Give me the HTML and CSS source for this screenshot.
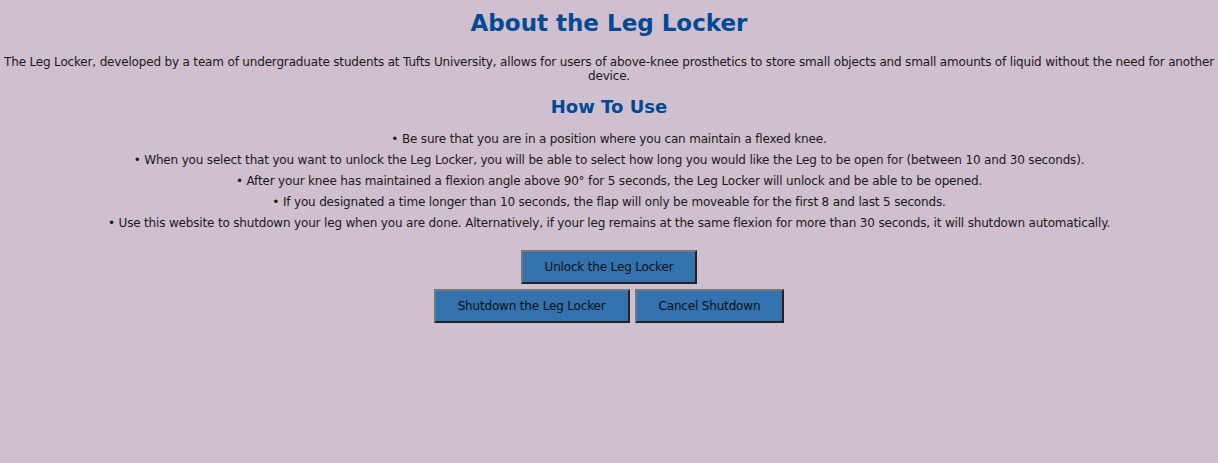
FILE: index.html
```html
<!DOCTYPE html>
<html>
<head>
<meta charset="utf-8">
<link rel="stylesheet" href="styles.css">
</head>
<body>
<div class="page">
  <h1 class="title">About the Leg Locker</h1>
  <p class="intro">The Leg Locker, developed by a team of undergraduate students at Tufts University, allows for users of above-knee prosthetics to store small objects and small amounts of liquid without the need for another device.</p>
  <h2 class="subtitle">How To Use</h2>
  <ul class="steps">
    <li>• Be sure that you are in a position where you can maintain a flexed knee.</li>
    <li>• When you select that you want to unlock the Leg Locker, you will be able to select how long you would like the Leg to be open for (between 10 and 30 seconds).</li>
    <li>• After your knee has maintained a flexion angle above 90° for 5 seconds, the Leg Locker will unlock and be able to be opened.</li>
    <li>• If you designated a time longer than 10 seconds, the flap will only be moveable for the first 8 and last 5 seconds.</li>
    <li>• Use this website to shutdown your leg when you are done. Alternatively, if your leg remains at the same flexion for more than 30 seconds, it will shutdown automatically.</li>
  </ul>
  <div class="actions">
    <div class="row">
      <button class="btn">Unlock the Leg Locker</button>
    </div>
    <div class="row">
      <button class="btn">Shutdown the Leg Locker</button>
      <button class="btn">Cancel Shutdown</button>
    </div>
  </div>
</div>
</body>
</html>
```
FILE: styles.css
```css
html, body {
  margin: 0;
  padding: 0;
  background: #cfbfcf;
}
body {
  font-family: "DejaVu Sans", Verdana, sans-serif;
  color: #1a1a1a;
  font-size: 12px;
  letter-spacing: -0.17px;
}
.page {
  padding: 0 4px;
  text-align: center;
}
.title {
  margin: 9px 0 0;
  font-size: 23px;
  line-height: 28px;
  letter-spacing: 0;
  color: #004a93;
  font-weight: bold;
}
.intro {
  margin: 18px 0 0;
  line-height: 14px;
}
.subtitle {
  margin: 13px 0 0;
  font-size: 18px;
  line-height: 22px;
  letter-spacing: 0;
  color: #004a93;
}
.steps {
  list-style: none;
  margin: 14px 0 0;
  padding: 0;
}
.steps li {
  line-height: 15px;
  margin-bottom: 6px;
}
.actions {
  margin-top: 19px;
  display: flex;
  flex-direction: column;
  align-items: center;
  gap: 5px;
}
.row {
  display: flex;
  gap: 5px;
  justify-content: center;
}
.btn {
  font-family: "DejaVu Sans", Verdana, sans-serif;
  font-size: 12px;
  letter-spacing: -0.17px;
  color: #111;
  background: #3371af;
  border: 2px solid;
  border-color: #777 #222 #222 #777;
  padding: 8px 22px;
  line-height: 15px;
  height: 34px;
}
```
